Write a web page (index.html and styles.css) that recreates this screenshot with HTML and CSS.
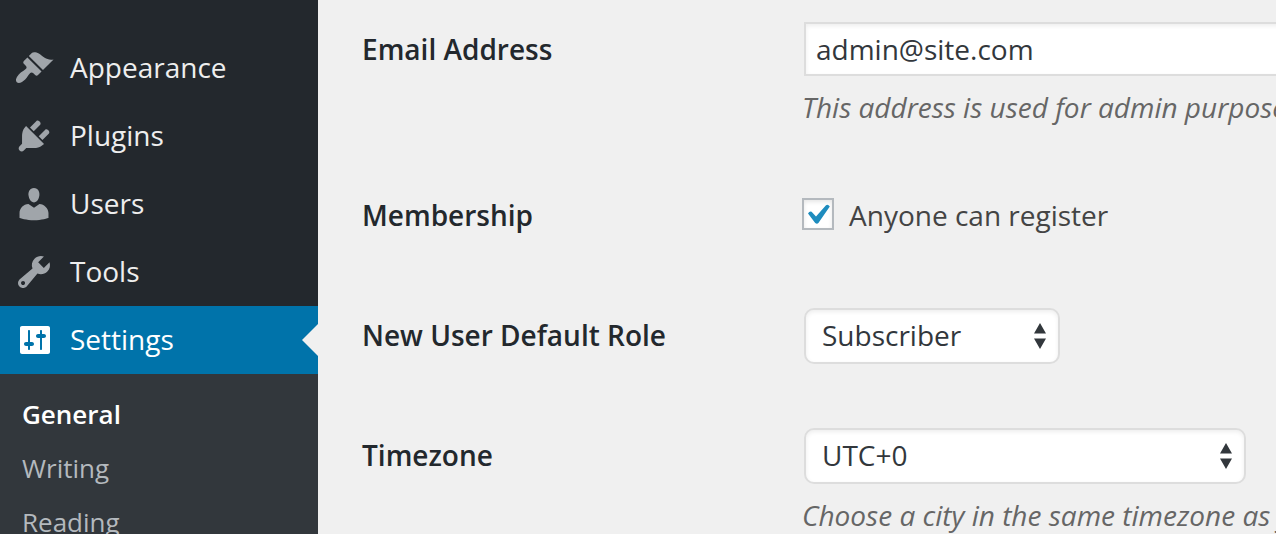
FILE: index.html
```
<!DOCTYPE html>
<html lang="en">
<head>
    <meta charset="UTF-8">
    <meta name="viewport" content="width=device-width, initial-scale=1.0">
    <title>General Settings</title>
    <link rel="stylesheet" href="styles.css">
</head>
<body>
    <div class="page">
        <nav class="sidebar">
            <a class="menu-item" href="#">
                <svg class="icon" viewBox="0 0 20 20"><path d="M14.48 11.06L7.41 3.99l1.5-1.5c.5-.56 2.3-.47 3.51.32 1.21.8 1.43 1.28 2.91 2.1 1.18.64 2.45 1.26 4.45.85zm-.71.71L6.7 4.7 4.93 6.47c-.39.39-.39 1.02 0 1.41l1.06 1.06c.39.39.39 1.03 0 1.42-.6.6-1.43 1.11-2.21 1.69-.35.26-.7.53-1.01.84C1.43 14.23.4 16.08 1.4 17.07c.99 1 2.84-.03 4.18-1.36.31-.31.58-.66.85-1.02.57-.78 1.08-1.61 1.69-2.21.39-.39 1.02-.39 1.41 0l1.06 1.06c.39.39 1.02.39 1.41 0z"/></svg>
                Appearance
            </a>
            <a class="menu-item" href="#">
                <svg class="icon" viewBox="0 0 20 20"><path d="M13.11 4.36L9.87 7.6 8 5.73l3.24-3.24c.35-.34 1.05-.2 1.56.32.52.51.66 1.21.31 1.55zm-8 1.77l.91-1.12 9.01 9.01-1.19.84c-.71.71-2.63 1.16-3.82 1.16H6.14L4.9 17.26c-.59.59-1.54.59-2.12 0-.59-.58-.59-1.53 0-2.12l1.24-1.24v-3.88c0-1.13.4-3.19 1.09-3.89zm7.26 3.97l3.24-3.24c.34-.35 1.04-.21 1.55.31.52.51.66 1.21.31 1.55l-3.24 3.25z"/></svg>
                Plugins
            </a>
            <a class="menu-item" href="#">
                <svg class="icon" viewBox="0 0 20 20"><path d="M10 9.25c-2.27 0-2.73-3.44-2.73-3.44C7 4.02 7.82 2 9.97 2c2.16 0 2.98 2.02 2.71 3.81 0 0-.41 3.44-2.68 3.44zm0 2.57L12.72 10c2.39 0 4.52 2.33 4.52 4.53v2.49s-3.65 1.13-7.24 1.13c-3.65 0-7.24-1.13-7.24-1.13v-2.49c0-2.25 1.94-4.48 4.47-4.48z"/></svg>
                Users
            </a>
            <a class="menu-item" href="#">
                <svg class="icon" viewBox="0 0 20 20"><path d="M16.68 9.77c-1.34 1.34-3.3 1.67-4.95.99l-5.41 6.52c-.99.99-2.59.99-3.58 0s-.99-2.59 0-3.57l6.52-5.42c-.68-1.65-.35-3.61.99-4.95 1.28-1.28 3.12-1.62 4.72-1.06l-2.89 2.89 2.82 2.82 2.86-2.87c.53 1.58.18 3.39-1.08 4.65zM3.81 16.21c.4.39 1.04.39 1.43 0 .4-.4.4-1.04 0-1.43-.39-.4-1.03-.4-1.43 0-.39.39-.39 1.03 0 1.43z"/></svg>
                Tools
            </a>
            <a class="menu-item current" href="#">
                <svg class="icon" viewBox="0 0 20 20"><path fill-rule="evenodd" d="M18 16V4c0-.55-.45-1-1-1H4c-.55 0-1 .45-1 1v12c0 .55.45 1 1 1h13c.55 0 1-.45 1-1zM8 11h1c.55 0 1 .45 1 1s-.45 1-1 1H8v1.5c0 .28-.22.5-.5.5s-.5-.22-.5-.5V13H6c-.55 0-1-.45-1-1s.45-1 1-1h1V5.5c0-.28.22-.5.5-.5s.5.22.5.5V11zm5-4h-1c-.55 0-1 .45-1 1s.45 1 1 1h1v5.5c0 .28.22.5.5.5s.5-.22.5-.5V9h1c.55 0 1-.45 1-1s-.45-1-1-1h-1V5.5c0-.28-.22-.5-.5-.5s-.5.22-.5.5V7z"/></svg>
                Settings
            </a>
            <div class="submenu">
                <a class="active" href="#">General</a>
                <a href="#">Writing</a>
                <a href="#">Reading</a>
            </div>
        </nav>

        <form class="settings">
            <div class="row">
                <label class="row-label" for="email">Email Address</label>
                <div class="field">
                    <input class="text-input" type="email" id="email" value="admin@site.com">
                    <p class="description">This address is used for admin purposes.</p>
                </div>
            </div>

            <div class="row">
                <span class="row-label">Membership</span>
                <label class="check-label" for="register">
                    <span class="check">
                        <input type="checkbox" id="register" checked>
                        <svg class="check-mark" viewBox="0 0 32 32"><path d="M6 15.5q1.4-2.6 3.6-1.8l4.4 4.9L24 7.2q2-1.4 3.8 1.2L16.4 25q-1.4 1.6-3.2 0z"/></svg>
                    </span>
                    Anyone can register
                </label>
            </div>

            <div class="row">
                <label class="row-label" for="role">New User Default Role</label>
                <div class="field">
                    <div class="select role">
                        <select id="role"><option>Subscriber</option></select>
                        <svg class="arrows" viewBox="0 0 12 26"><path d="M0 10.5L6 0l6 10.5zM0 15.5L6 26l6-10.5z"/></svg>
                    </div>
                </div>
            </div>

            <div class="row">
                <label class="row-label" for="timezone">Timezone</label>
                <div class="field">
                    <div class="select timezone">
                        <select id="timezone"><option>UTC+0</option></select>
                        <svg class="arrows" viewBox="0 0 12 26"><path d="M0 10.5L6 0l6 10.5zM0 15.5L6 26l6-10.5z"/></svg>
                    </div>
                    <p class="description">Choose a city in the same timezone as you.</p>
                </div>
            </div>
        </form>
    </div>
</body>
</html>
```
FILE: styles.css
```
* {
    box-sizing: border-box;
}
body {
    margin: 0;
    font-family: "Open Sans", sans-serif;
    font-size: 28px;
    background: #f0f0f0;
    color: #444;
}
.page {
    display: flex;
    height: 100vh;
    overflow: hidden;
}

/* Sidebar */
.sidebar {
    display: flex;
    flex-direction: column;
    flex: 0 0 318px;
    padding-top: 34px;
    background: #23282d;
}
.menu-item {
    display: flex;
    flex-shrink: 0;
    align-items: center;
    gap: 16px;
    height: 68px;
    padding: 0 0 2px 14px;
    color: #eee;
    text-decoration: none;
}
.icon {
    width: 40px;
    height: 40px;
    margin-top: 2px;
    fill: #a0a5aa;
}
.current {
    background: #0073aa;
    color: #fff;
}
.current .icon {
    fill: #fff;
}
.current::after {
    content: "";
    margin: 2px 0 0 auto;
    border: 16px solid transparent;
    border-left: 0;
    border-right-color: #f0f0f0;
}
.submenu {
    flex: 1 0 auto;
    padding: 13px 22px;
    background: #32373c;
}
.submenu a {
    display: block;
    font-size: 26px;
    line-height: 54px;
    color: #b4b9be;
    text-decoration: none;
}
.submenu .active {
    color: #fff;
    font-weight: 600;
}

/* Settings form */
.settings {
    flex: 1;
    min-width: 0;
    display: flex;
    flex-direction: column;
    gap: 64px;
    padding: 22px 0 0 44px;
}
.row {
    display: grid;
    grid-template-columns: 440px 1fr;
    align-items: start;
    min-height: 56px;
}
.row-label {
    line-height: 54px;
    font-weight: 600;
    color: #23282d;
}
.text-input,
.select select {
    display: block;
    border: 2px solid #ddd;
    background: #fff;
    box-shadow: inset 0 2px 4px rgba(0, 0, 0, 0.07);
    font: inherit;
    color: #32373c;
}
.text-input {
    width: 700px;
    height: 54px;
    margin-left: 2px;
    padding: 0 10px;
}
.description {
    margin: 14px 0 0;
    line-height: 34px;
    font-style: italic;
    white-space: nowrap;
    color: #666;
}
.check-label {
    display: flex;
    align-items: center;
    gap: 15px;
    line-height: 54px;
}
.check {
    display: grid;
    margin-bottom: 2px;
}
.check input {
    grid-area: 1 / 1;
    appearance: none;
    width: 32px;
    height: 32px;
    margin: 0;
    border: 2px solid #b4b9be;
    background: #fff;
    box-shadow: inset 0 2px 4px rgba(0, 0, 0, 0.1);
}
.check-mark {
    grid-area: 1 / 1;
    width: 32px;
    height: 32px;
    fill: #1e8cbe;
    pointer-events: none;
    visibility: hidden;
}
.check input:checked + .check-mark {
    visibility: visible;
}
.select {
    display: grid;
    align-items: center;
    margin-left: 2px;
}
.role {
    width: 256px;
}
.timezone {
    width: 442px;
}
.select select {
    grid-area: 1 / 1;
    appearance: none;
    width: 100%;
    height: 56px;
    padding: 0 16px 2px;
    border-radius: 10px;
}
.arrows {
    grid-area: 1 / 1;
    justify-self: end;
    width: 12px;
    height: 26px;
    margin-right: 14px;
    fill: #32373c;
    pointer-events: none;
}
```
